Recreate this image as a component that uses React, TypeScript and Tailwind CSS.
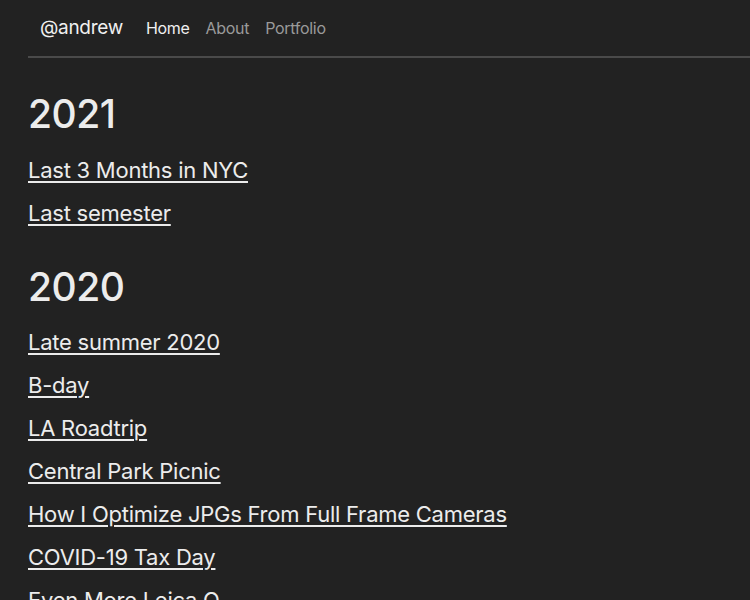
import React from "react";

const y2021 = ["Last 3 Months in NYC", "Last semester"];
const y2020 = [
  "Late summer 2020",
  "B-day",
  "LA Roadtrip",
  "Central Park Picnic",
  "How I Optimize JPGs From Full Frame Cameras",
  "COVID-19 Tax Day",
  "Even More Leica Q",
  "Leica Q",
];

function Links({ items }: { items: string[] }) {
  return (
    <ul>
      {items.map((t) => (
        <li key={t} className="h-[43px] leading-[43px]">
          <a href="#" className="text-[22px] tracking-[-0.25px] underline decoration-[1.5px] underline-offset-[3px] text-[#ececec]">
            {t}
          </a>
        </li>
      ))}
    </ul>
  );
}

export default function App() {
  return (
    <div className="min-h-[600px] bg-[#222222] text-[#ececec] pl-[28px] overflow-hidden" style={{ fontFamily: "Inter, 'Noto Sans', sans-serif" }}>
      <header className="flex items-center h-[58px] pl-[12px] border-b-2 border-[#4a4a4a]">
        <span className="text-[19px] tracking-[-0.3px] text-[#f0f0f0]">@andrew</span>
        <nav className="flex gap-[16px] ml-[23px] text-[16px] tracking-[-0.3px]">
          <a className="text-[#f0f0f0]" href="#">Home</a>
          <a className="text-[#9a9a9a]" href="#">About</a>
          <a className="text-[#9a9a9a]" href="#">Portfolio</a>
        </nav>
      </header>
      <main>
        <h2 className="text-[39px] font-medium tracking-[-0.5px] leading-[48px] mt-[32px] mb-[11px]">2021</h2>
        <Links items={y2021} />
        <h2 className="text-[39px] font-medium tracking-[-0.5px] leading-[48px] mt-[28px] mb-[10px]">2020</h2>
        <Links items={y2020} />
      </main>
    </div>
  );
}
